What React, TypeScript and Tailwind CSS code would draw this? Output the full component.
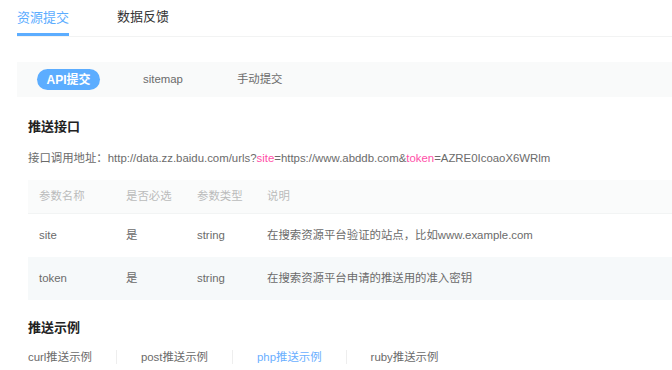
import React from 'react'

const params = [
  { name: 'site', required: '是', type: 'string', desc: '在搜索资源平台验证的站点，比如www.example.com', alt: false },
  { name: 'token', required: '是', type: 'string', desc: '在搜索资源平台申请的推送用的准入密钥', alt: true },
]

const examples = [
  { label: 'curl推送示例', active: false },
  { label: 'post推送示例', active: false },
  { label: 'php推送示例', active: true },
  { label: 'ruby推送示例', active: false },
]

export default function App() {
  return (
    <div
      className="h-[370px] w-[672px] overflow-hidden bg-white text-[11.4px] text-[#6b6b6b]"
      style={{ fontFamily: '"Liberation Sans", "Noto Sans CJK SC", sans-serif' }}
    >
      {/* top tabs */}
      <div className="ml-[17px] flex h-[37px] border-b border-[#f2f3f3]">
        <div className="flex h-full items-center border-b-[3px] border-[#5cadff] pt-[3px] text-[13px] text-[#5cadff]">
          资源提交
        </div>
        <div className="ml-[48px] flex h-full items-center pb-[3px] text-[13px] text-[#333]">数据反馈</div>
      </div>

      {/* sub tabs */}
      <div className="ml-[17px] mt-[25px] flex h-[35px] items-center bg-[#f9fafa]">
        <div className="ml-[20px] flex h-[21px] w-[63px] items-center justify-center rounded-full bg-[#5cadff] text-[12px] font-bold text-white">
          API提交
        </div>
        <div className="ml-[43px]">sitemap</div>
        <div className="ml-[54px]">手动提交</div>
      </div>

      <div className="ml-[28px]">
        <div className="mt-[21px] text-[13px] font-bold leading-[18px] text-[#222]">推送接口</div>
        <div className="mt-[13px] leading-[18px]">
          接口调用地址：http://data.zz.baidu.com/urls?<span className="text-[#ff4fa8]">site</span>
          =https://www.abddb.com&amp;<span className="text-[#ff4fa8]">token</span>=AZRE0IcoaoX6WRlm
        </div>

        {/* params table */}
        <div className="mt-[13px]">
          <div className="flex h-[34px] items-center border-b border-[#f2f4f4] bg-[#fafbfb] text-[#bbb]">
            <div className="w-[98px] pl-[11px]">参数名称</div>
            <div className="w-[71px]">是否必选</div>
            <div className="w-[70px]">参数类型</div>
            <div>说明</div>
          </div>
          {params.map((p) => (
            <div
              key={p.name}
              className={`flex h-[43px] items-center ${p.alt ? 'bg-[#f6f9fa]' : 'bg-white'}`}
            >
              <div className="w-[98px] pl-[11px]">{p.name}</div>
              <div className="w-[71px]">{p.required}</div>
              <div className="w-[70px]">{p.type}</div>
              <div>{p.desc}</div>
            </div>
          ))}
        </div>

        <div className="mt-[19px] text-[13px] font-bold leading-[18px] text-[#222]">推送示例</div>
        <div className="mt-[11px] flex items-center leading-[18px]">
          {examples.map((e, i) => (
            <React.Fragment key={e.label}>
              {i > 0 && <div className="mx-[24px] h-[14px] w-px bg-[#eee]" />}
              <div className={e.active ? 'text-[#6aafff]' : ''}>{e.label}</div>
            </React.Fragment>
          ))}
        </div>
      </div>
    </div>
  )
}
